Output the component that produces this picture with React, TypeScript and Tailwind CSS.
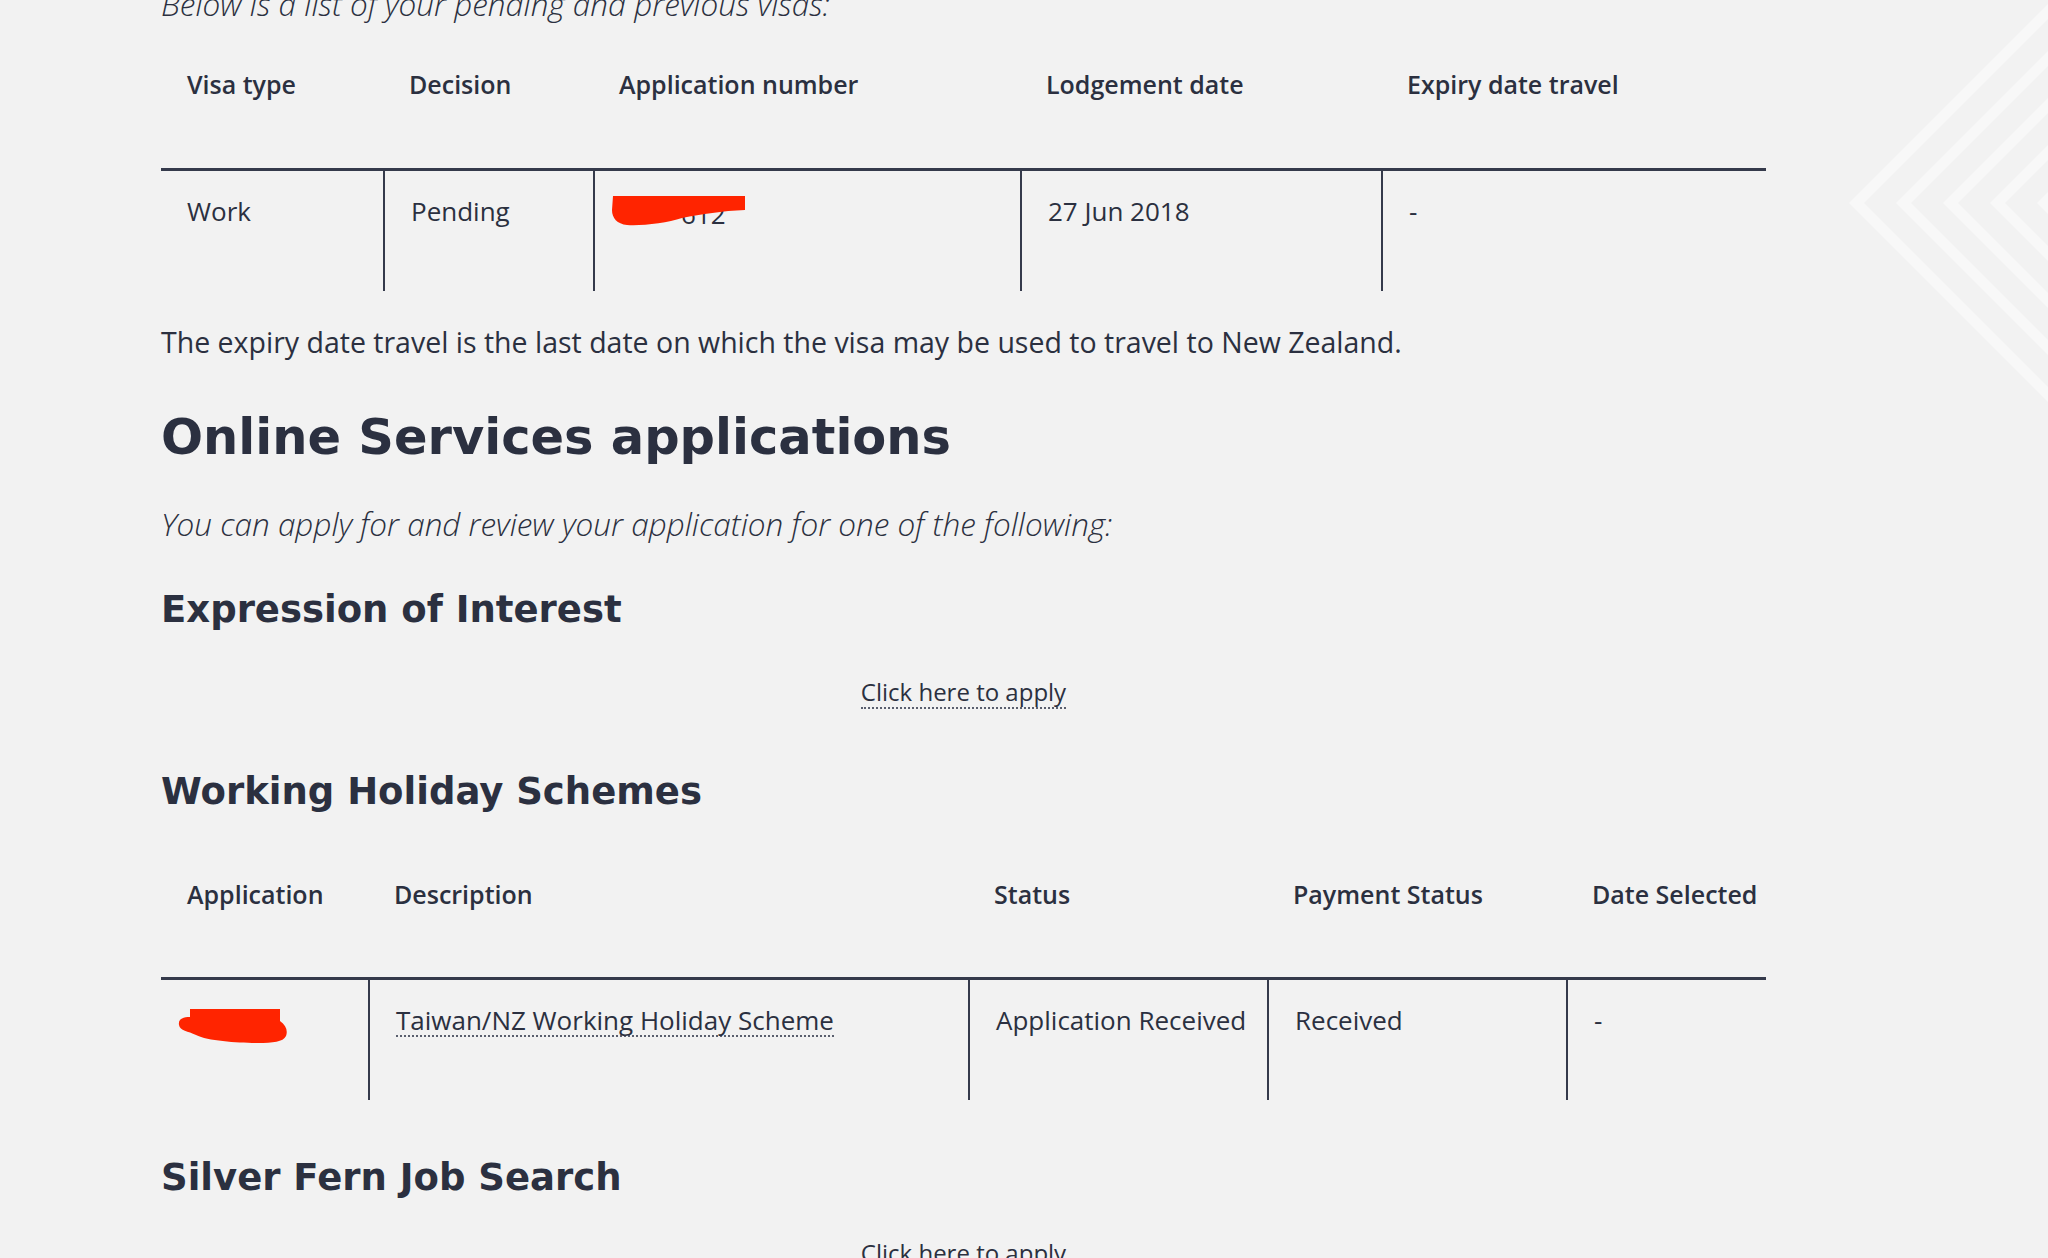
import React from "react";

const body = "font-['Open_Sans','Noto_Sans',sans-serif]";
const head = "font-['DejaVu_Sans','Open_Sans',sans-serif]";

function Chevrons() {
  return (
    <svg className="absolute right-0 top-0" width="200" height="460" viewBox="0 0 200 460">
      {[0, 1, 2, 3, 4].map((k) => {
        const x = 8.5 + 47 * k;
        return (
          <polyline
            key={k}
            points={`${x + 260},-57 ${x},203 ${x + 260},463`}
            fill="none"
            stroke="#f8f8f8"
            strokeWidth="10.6"
            strokeLinejoin="miter"
          />
        );
      })}
    </svg>
  );
}

function Link({ children }: { children: React.ReactNode }) {
  return (
    <span className="inline-block border-b-2 border-dotted border-[#5a5f6e] leading-[30px] text-[#2b3040]">
      {children}
    </span>
  );
}

function Scribble1() {
  return (
    <span className="relative inline-block w-[134px] h-[30px] align-top">
      <span className="absolute left-[69px] top-[3px] text-[26px] leading-[30px] text-[#2b3040]">612</span>
      <svg className="absolute left-0 top-0" width="134" height="31" viewBox="0 0 134 31">
        <path
          d="M1 0 H133 V14 C110 15 90 18 70 22 C55 27 30 30 15 29 C5 28 0 22 0 14 Z"
          fill="#ff2400"
        />
      </svg>
    </span>
  );
}

function Scribble2() {
  return (
    <svg width="110" height="36" viewBox="0 0 110 36">
      <path d="M12 1 H102" stroke="#555" strokeWidth="1.5" strokeDasharray="2 2" />
      <path
        d="M12 0 H102 V12 C108 16 110 22 108 27 C105 33 95 34 80 34 C60 34 30 32 18 26 C10 22 2 22 1 16 C0 10 5 8 12 8 Z"
        fill="#ff2400"
      />
    </svg>
  );
}

const th = "pl-[26px] font-semibold text-[25px] leading-[36px] text-[#2b3040]";
const td = "pl-[26px] pt-[22px] text-[26px] leading-[36px] text-[#2b3040]";

function VisaTable() {
  const cols = "grid grid-cols-[222px_210px_427px_361px_385px]";
  return (
    <div className="w-[1605px]">
      <div className={`${cols} pt-[42px] pb-[66px] border-b-[3px] border-[#353a4b]`}>
        <div className={th}>Visa type</div>
        <div className={th}>Decision</div>
        <div className={th}>Application number</div>
        <div className={th}>Lodgement date</div>
        <div className={th}>Expiry date travel</div>
      </div>
      <div className={`${cols} h-[120px]`}>
        <div className={td}>Work</div>
        <div className={`${td} border-l-2 border-[#353a4b]`}>Pending</div>
        <div className={`${td} border-l-2 border-[#353a4b] !pl-[17px] pt-[25px]`}>
          <Scribble1 />
        </div>
        <div className={`${td} border-l-2 border-[#353a4b]`}>27 Jun 2018</div>
        <div className={`${td} border-l-2 border-[#353a4b]`}>-</div>
      </div>
    </div>
  );
}

function WhsTable() {
  const cols = "grid grid-cols-[207px_600px_299px_299px_200px]";
  return (
    <div className="w-[1605px]">
      <div className={`${cols} pt-[62px] pb-[65px] border-b-[3px] border-[#353a4b]`}>
        <div className={th}>Application</div>
        <div className={th}>Description</div>
        <div className={th}>Status</div>
        <div className={th}>Payment Status</div>
        <div className={th}>Date Selected</div>
      </div>
      <div className={`${cols} h-[120px]`}>
        <div className="pl-[17px] pt-[29px]">
          <Scribble2 />
        </div>
        <div className={`${td} border-l-2 border-[#353a4b]`}>
          <Link>Taiwan/NZ Working Holiday Scheme</Link>
        </div>
        <div className={`${td} border-l-2 border-[#353a4b]`}>Application Received</div>
        <div className={`${td} border-l-2 border-[#353a4b]`}>Received</div>
        <div className={`${td} border-l-2 border-[#353a4b]`}>-</div>
      </div>
    </div>
  );
}

export default function App() {
  return (
    <div className={`relative h-[1258px] overflow-hidden bg-[#f2f2f2] ${body}`}>
      <Chevrons />
      <div className="relative pl-[161px]">
        <p className="-mt-[16px] text-[31.5px] leading-[40px] italic font-light text-[#2b3040]">
          Below is a list of your pending and previous visas:
        </p>
        <VisaTable />
        <p className="mt-[33px] text-[28.5px] leading-[36px] font-medium text-[#2b3040]">
          The expiry date travel is the last date on which the visa may be used to travel to New Zealand.
        </p>
        <h2 className={`${head} mt-[47px] text-[49.5px] leading-[60px] font-bold text-[#2b3040]`}>
          Online Services applications
        </h2>
        <p className="mt-[37px] text-[31.5px] leading-[40px] italic font-light text-[#2b3040]">
          You can apply for and review your application for one of the following:
        </p>
        <h3 className={`${head} mt-[44px] text-[37px] leading-[44px] font-bold text-[#2b3040]`}>
          Expression of Interest
        </h3>
        <div className="mt-[42px] w-[1605px] text-center text-[24px] leading-[36px]">
          <Link>Click here to apply</Link>
        </div>
        <h3 className={`${head} mt-[60px] text-[37px] leading-[44px] font-bold text-[#2b3040]`}>
          Working Holiday Schemes
        </h3>
        <WhsTable />
        <h3 className={`${head} mt-[56px] text-[37px] leading-[44px] font-bold text-[#2b3040]`}>
          Silver Fern Job Search
        </h3>
        <div className="mt-[35px] w-[1605px] text-center text-[24px] leading-[36px]">
          <Link>Click here to apply</Link>
        </div>
      </div>
    </div>
  );
}
